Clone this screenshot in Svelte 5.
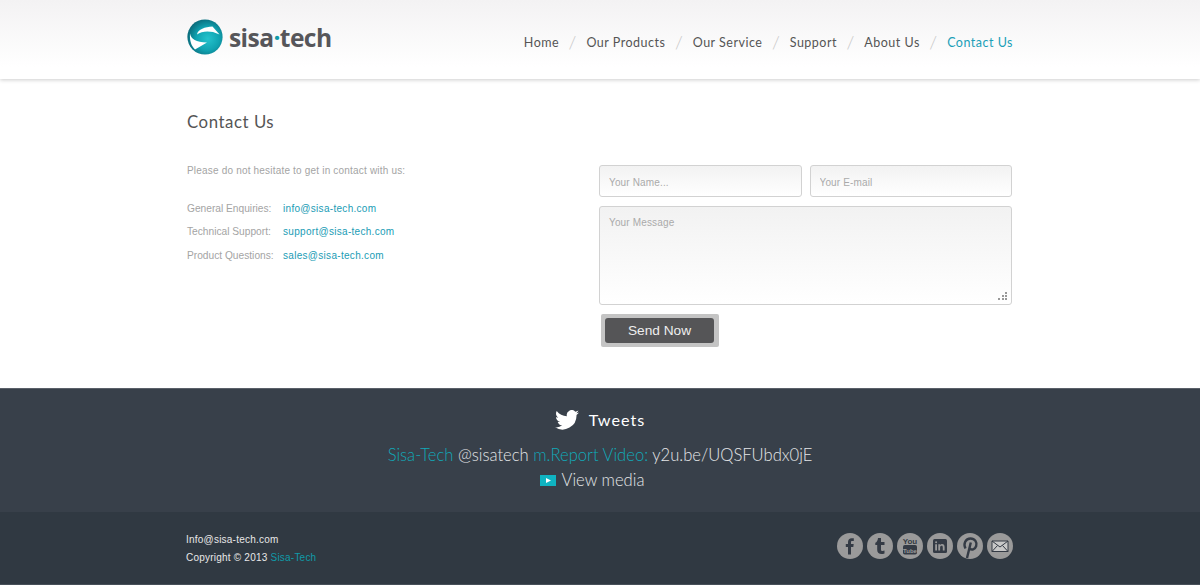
<script lang="ts">
	const nav = ['Home', 'Our Products', 'Our Service', 'Support', 'About Us', 'Contact Us'];
	const contacts = [
		{ label: 'General Enquiries:', email: 'info@sisa-tech.com' },
		{ label: 'Technical Support:', email: 'support@sisa-tech.com' },
		{ label: 'Product Questions:', email: 'sales@sisa-tech.com' }
	];
</script>

<svelte:head>
	<title>Contact Us</title>
</svelte:head>

<header class="topbar">
	<div class="wrap topbar-in">
		<a href="#home" class="logo">
			<svg width="36" height="36" viewBox="0 0 36 36" aria-hidden="true">
				<defs>
					<radialGradient id="ball" cx="0.58" cy="0.55" r="0.6">
						<stop offset="0" stop-color="#25c3cd" />
						<stop offset="0.55" stop-color="#10a3b1" />
						<stop offset="1" stop-color="#0a6878" />
					</radialGradient>
				</defs>
				<circle cx="18" cy="18" r="17.6" fill="url(#ball)" />
				<path d="M10 15.500 C11 10 18 8 25.500 7.500 L32.500 15.500 L26 13 C21 12 14 12 10 15.500 Z" fill="#fff" />
				<path d="M3 14.500 C4 20 9 23 20 23.500 L8 30.500 C4.500 27 2.500 22 3 14.500 Z" fill="#fff" />
			</svg>
			<span class="logo-text">sisa<i>·</i>tech</span>
		</a>
		<nav class="nav">
			{#each nav as item, i}
				{#if i > 0}<span class="sep">/</span>{/if}
				<a href="#{item}" class:active={item === 'Contact Us'}>{item}</a>
			{/each}
		</nav>
	</div>
</header>

<main class="wrap content">
	<h1>Contact Us</h1>
	<div class="cols">
		<section class="info">
			<p class="lead">Please do not hesitate to get in contact with us:</p>
			<dl>
				{#each contacts as c}
					<div class="row">
						<dt>{c.label}</dt>
						<dd><a href="mailto:{c.email}">{c.email}</a></dd>
					</div>
				{/each}
			</dl>
		</section>
		<form class="form">
			<div class="two">
				<input type="text" placeholder="Your Name..." />
				<input type="text" placeholder="Your E-mail" />
			</div>
			<textarea placeholder="Your Message"></textarea>
			<button type="button" class="send"><span>Send Now</span></button>
		</form>
	</div>
</main>

<section class="tweets">
	<h2>
		<svg width="24" height="20" viewBox="0 0 24 20" aria-hidden="true">
			<path
				fill="#fff"
				d="M24 2.400c-.9.4-1.800.7-2.800.8 1-.6 1.800-1.600 2.200-2.700-1 .6-2 1-3.100 1.200A4.900 4.900 0 0 0 11.900 6.200C7.800 6 4.200 4.100 1.700.9c-1.300 2.200-.7 5.100 1.500 6.600-.8 0-1.600-.2-2.200-.6 0 2.300 1.600 4.400 3.900 4.900-.7.200-1.500.2-2.200.1.600 2 2.400 3.400 4.600 3.400A9.900 9.900 0 0 1 0 17.300 14 14 0 0 0 21.500 4.900c1-.7 1.800-1.500 2.500-2.500z"
			/>
		</svg>
		<span>Tweets</span>
	</h2>
	<p><a href="#sisa">Sisa-Tech</a> @sisatech <a href="#video">m.Report Video:</a> y2u.be/UQSFUbdx0jE</p>
	<p class="media">
		<svg width="16" height="11" viewBox="0 0 16 11" aria-hidden="true">
			<rect width="16" height="11" fill="#0fb3c1" />
			<path d="M6 3 L11 5.500 L6 8 Z" fill="#fff" />
		</svg>
		<span>View media</span>
	</p>
</section>

<footer class="bottom">
	<div class="wrap bottom-in">
		<div class="copy">
			<p>Info@sisa-tech.com</p>
			<p>Copyright © 2013 <a href="#sisa">Sisa-Tech</a></p>
		</div>
		<div class="social">
			<svg class="ico" viewBox="0 0 26 26" aria-label="Facebook">
				<circle cx="13" cy="13" r="13" />
				<path class="cut" d="M11 21.500 V14 H8.800 V11 H11 V9 C11 6.500 12.500 5.200 14.700 5.200 C15.700 5.200 16.500 5.300 16.800 5.300 V8 H15.300 C14.200 8 14 8.500 14 9.300 V11 H16.700 L16.300 14 H14 V21.500 Z" />
			</svg>
			<svg class="ico" viewBox="0 0 26 26" aria-label="Tumblr">
				<circle cx="13" cy="13" r="13" />
				<path class="cut" d="M11 5 H14 V9 H17.500 V12 H14 V16.500 C14 18 15.500 18.500 17.500 17.600 V20.500 C13.500 22 10.200 20.500 10.200 17 V12 H8.300 V9.800 C9.800 9.200 10.800 7.500 11 5 Z" />
			</svg>
			<svg class="ico" viewBox="0 0 26 26" aria-label="YouTube">
				<circle cx="13" cy="13" r="13" />
				<rect class="cut" x="6" y="12" width="14" height="9.500" rx="1.800" />
				<text class="yt" x="13" y="10.500" text-anchor="middle">You</text>
				<text class="yt2" x="13" y="19.500" text-anchor="middle">Tube</text>
			</svg>
			<svg class="ico" viewBox="0 0 26 26" aria-label="LinkedIn">
				<circle cx="13" cy="13" r="13" />
				<rect class="cut" x="6" y="6" width="14" height="14" rx="1.500" />
				<path fill="#9a9a9a" d="M8.200 11.300 H10 V17.500 H8.200 Z M9.100 8.300 A1 1 0 1 1 9.100 10.300 A1 1 0 1 1 9.100 8.300 Z M11.300 11.300 H13 V12.100 C13.500 11.400 14.200 11.100 15 11.100 C16.800 11.100 17.600 12.200 17.600 14 V17.500 H15.800 V14.300 C15.800 13.300 15.500 12.700 14.600 12.700 C13.700 12.700 13.100 13.300 13.100 14.300 V17.500 H11.300 Z" />
			</svg>
			<svg class="ico" viewBox="0 0 26 26" aria-label="Pinterest">
				<circle cx="13" cy="13" r="13" />
				<path class="pin" d="M8.500 15.500 C6 11 8.500 5.500 13.500 5.500 C18 5.500 20.300 9.500 19.200 13 C18 16.500 14.500 17.500 13 15.500 M13.800 9.500 L10 25" />
			</svg>
			<svg class="ico" viewBox="0 0 26 26" aria-label="Mail">
				<circle cx="13" cy="13" r="13" />
				<path d="M5 8 H21 V18.500 H5 Z" fill="#c8c8c8" stroke="#343b45" stroke-width="1" />
				<path fill="none" stroke="#343b45" stroke-width="1" d="M5 8 L13 14 L21 8 M5 18.500 L10.500 12.500 M21 18.500 L15.500 12.500" />
			</svg>
		</div>
	</div>
</footer>

<style>
	:global(body) {
		margin: 0;
		background: #fff;
		font-family: 'Liberation Sans', Arial, sans-serif;
	}

	:global(*) {
		box-sizing: border-box;
	}

	a {
		text-decoration: none;
		color: inherit;
	}

	.wrap {
		width: 826px;
		margin-left: 187px;
	}

	.topbar {
		height: 79px;
		background: linear-gradient(#f3f2f3, #fff 85%);
		box-shadow: 0 1px 4px rgba(0, 0, 0, 0.2);
	}

	.topbar-in {
		display: flex;
		justify-content: space-between;
		height: 100%;
	}

	.logo {
		display: flex;
		align-items: center;
		gap: 6px;
		height: 74px;
	}

	.logo-text {
		font-family: 'Open Sans', sans-serif;
		font-weight: 700;
		font-size: 24.6px;
		letter-spacing: -0.6px;
		color: #56565a;
	}

	.logo-text i {
		font-style: normal;
		color: #0f9aa8;
	}

	.nav {
		display: flex;
		align-items: center;
		height: 84px;
		font-family: Lato, sans-serif;
		font-size: 12.5px;
		letter-spacing: 0.5px;
		color: #555;
	}

	.sep {
		font-size: 18px;
		font-weight: 300;
		color: #c8c8c8;
		margin: 0 9.5px;
	}

	.active {
		color: #1b9fb8;
	}

	.content {
		padding-top: 32px;
		height: 309px;
	}

	h1 {
		margin: 0;
		font-family: Lato, sans-serif;
		font-weight: 400;
		font-size: 16.8px;
		line-height: 22px;
		letter-spacing: 0.55px;
		color: #555;
	}

	.cols {
		display: flex;
		margin-top: 32px;
	}

	.info {
		width: 412px;
		font-size: 10px;
		color: #a4a4a4;
	}

	.lead {
		margin: 0 0 25.500px;
		line-height: 12px;
		letter-spacing: 0.19px;
	}

	dl {
		margin: 0;
	}

	.row {
		display: flex;
		height: 23.6px;
		line-height: 12px;
	}

	dt {
		width: 96px;
		font-size: 10.2px;
	}

	dd {
		margin: 0;
		color: #1a9cb5;
		letter-spacing: 0.3px;
	}

	.form {
		width: 413px;
		display: flex;
		flex-direction: column;
		align-items: flex-start;
	}

	.two {
		display: flex;
		gap: 8px;
		width: 100%;
		margin-bottom: 9px;
	}

	input,
	textarea {
		display: block;
		border: 1px solid #d2d2d2;
		border-radius: 3px;
		background: linear-gradient(#f2f2f2, #fff);
		font-family: 'Liberation Sans', Arial, sans-serif;
		font-size: 10px;
		letter-spacing: 0.15px;
		padding: 0 9px;
		outline: none;
	}

	input {
		flex: 1;
		min-width: 0;
		height: 32px;
		padding-top: 2px;
	}

	textarea {
		width: 100%;
		height: 99px;
		padding-top: 10px;
	}

	textarea::-webkit-resizer {
		background:
			linear-gradient(#999, #999) 9px 3px / 2px 2px no-repeat,
			linear-gradient(#999, #999) 6px 6px / 2px 2px no-repeat,
			linear-gradient(#999, #999) 9px 6px / 2px 2px no-repeat,
			linear-gradient(#999, #999) 2px 9px / 2px 2px no-repeat,
			linear-gradient(#999, #999) 6px 9px / 2px 2px no-repeat,
			linear-gradient(#999, #999) 9px 9px / 2px 2px no-repeat;
	}

	input::placeholder,
	textarea::placeholder {
		color: #aaa;
		opacity: 1;
	}

	.send {
		margin: 9px 0 0 2px;
		width: 118px;
		height: 33px;
		border: none;
		border-radius: 2px;
		background: #c4c4c4;
		padding: 4px 5px 4px 4px;
		font-family: 'Liberation Sans', Arial, sans-serif;
		font-size: 13.7px;
		color: #eee;
	}

	.send span {
		display: flex;
		align-items: center;
		justify-content: center;
		height: 100%;
		padding-bottom: 1px;
		border-radius: 3px;
		background: #555557;
	}

	.tweets {
		height: 124px;
		background: #38404a;
		border-top: 1px solid #5a6069;
		text-align: center;
		color: #e4e6e8;
		font-family: Lato, sans-serif;
		font-weight: 300;
		font-size: 16.6px;
		padding-top: 20px;
	}

	.tweets h2 {
		margin: 0 0 12px;
		display: flex;
		justify-content: center;
		align-items: center;
		gap: 10px;
		font-size: 16.2px;
		font-weight: 400;
		letter-spacing: 1px;
		color: #fff;
		line-height: 22px;
	}

	.tweets p {
		margin: 0;
		line-height: 25px;
	}

	.tweets a {
		color: #11a9b9;
	}

	.media {
		display: flex;
		justify-content: center;
		align-items: center;
		gap: 6px;
		padding-right: 16px;
	}

	.bottom {
		height: 73px;
		background: #303942;
		border-bottom: 1px solid #475059;
	}

	.bottom-in {
		display: flex;
		justify-content: space-between;
		align-items: flex-start;
	}

	.copy {
		margin-left: -1px;
		padding-top: 19px;
		font-size: 10px;
		letter-spacing: 0.22px;
		color: #e8e8e8;
	}

	.copy p {
		margin: 0;
		line-height: 18px;
	}

	.copy a {
		color: #0f9aa8;
	}

	.social {
		display: flex;
		gap: 4px;
		padding-top: 21px;
	}

	.ico {
		width: 26px;
		height: 26px;
		fill: #9a9a9a;
	}

	.cut {
		fill: #343b45;
	}

	.pin {
		fill: none;
		stroke: #343b45;
		stroke-width: 2.4;
	}

	.yt {
		font-family: 'Liberation Sans', sans-serif;
		font-size: 8px;
		font-weight: 700;
		fill: #343b45;
	}

	.yt2 {
		font-family: 'Liberation Sans', sans-serif;
		font-size: 6px;
		font-weight: 700;
		fill: #9a9a9a;
	}
</style>
